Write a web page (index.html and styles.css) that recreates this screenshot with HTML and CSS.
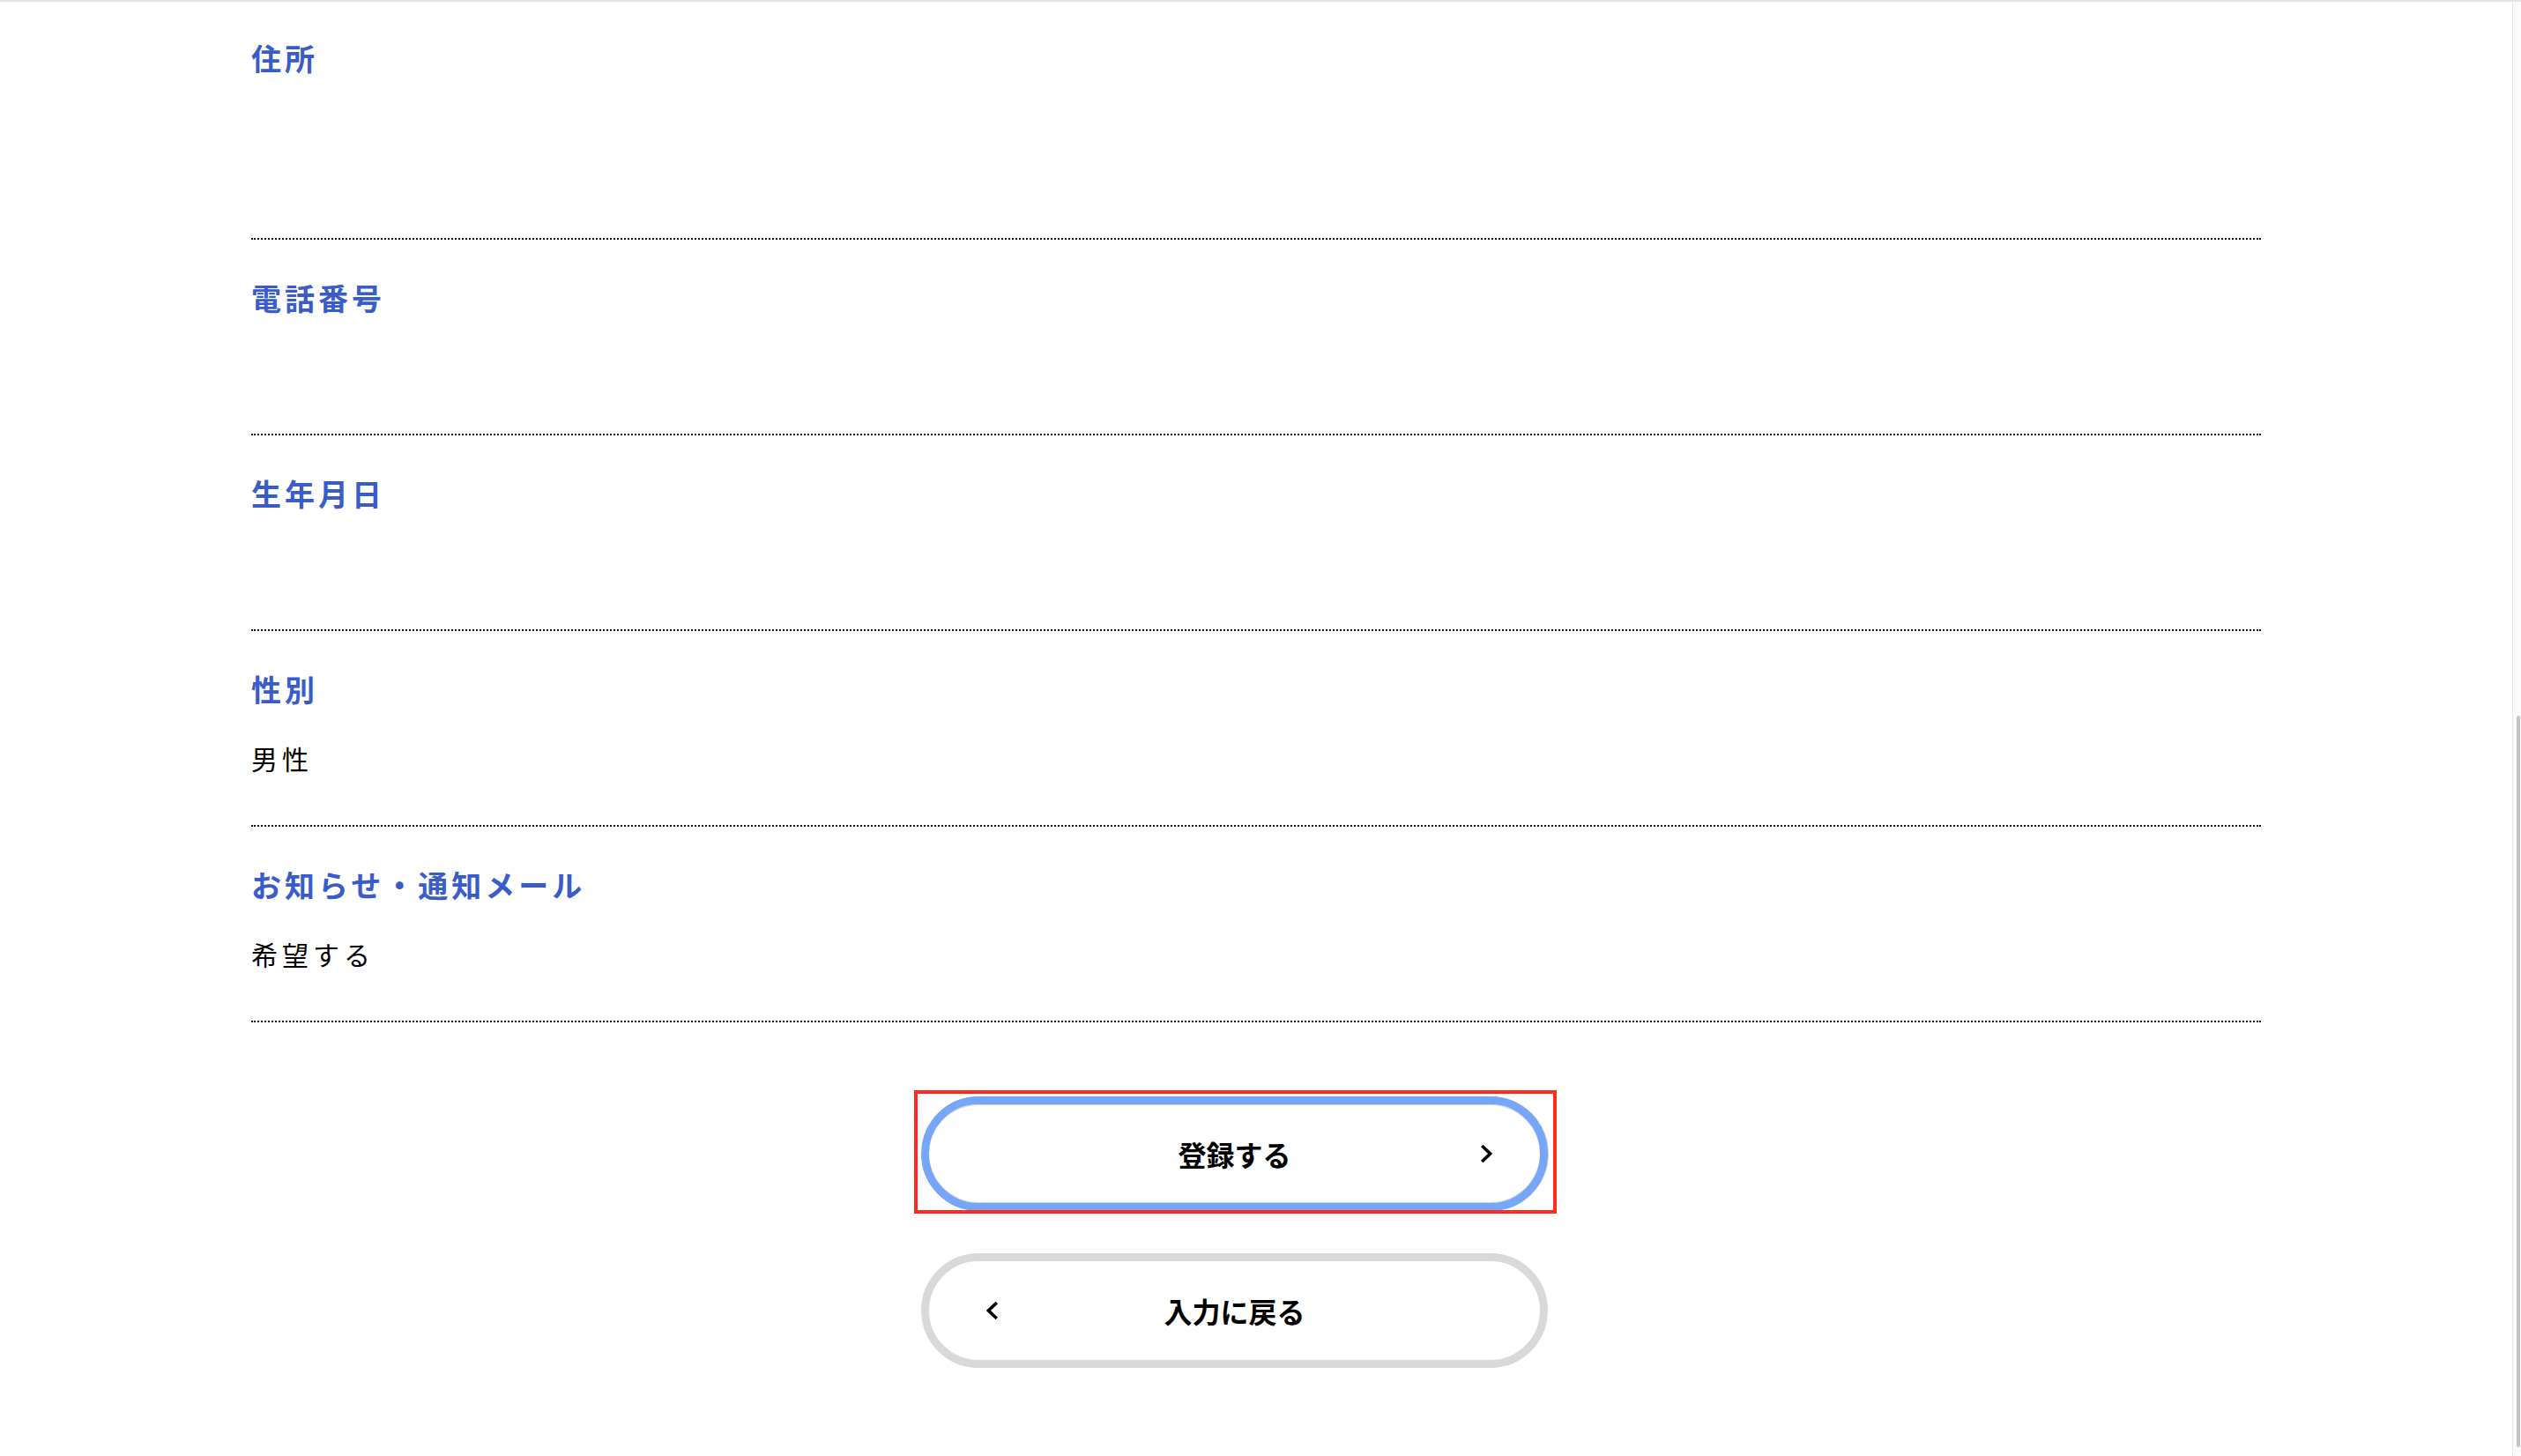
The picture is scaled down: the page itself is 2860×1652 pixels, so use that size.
FILE: index.html
```html
<!DOCTYPE html>
<html lang="ja">
<head>
<meta charset="utf-8">
<title>確認画面</title>
<link rel="stylesheet" href="styles.css">
</head>
<body>
<div class="window">
  <main class="page">
    <section class="confirm">
      <dl class="rows">
        <div class="row row-address">
          <dt class="label">住所</dt>
          <dd class="value value-address"></dd>
        </div>
        <div class="row">
          <dt class="label">電話番号</dt>
          <dd class="value"></dd>
        </div>
        <div class="row">
          <dt class="label">生年月日</dt>
          <dd class="value"></dd>
        </div>
        <div class="row">
          <dt class="label">性別</dt>
          <dd class="value">男性</dd>
        </div>
        <div class="row">
          <dt class="label">お知らせ・通知メール</dt>
          <dd class="value">希望する</dd>
        </div>
      </dl>
      <div class="actions">
        <button class="btn btn-primary" type="button">
          <span class="btn-text">登録する</span>
          <svg class="chev chev-next" width="14" height="22" viewBox="0 0 14 22" aria-hidden="true"><path d="M2.2 2 L11.6 11 L2.2 20" /></svg>
          <span class="highlight"></span>
        </button>
        <button class="btn btn-back" type="button">
          <svg class="chev chev-prev" width="14" height="22" viewBox="0 0 14 22" aria-hidden="true"><path d="M11.8 2 L2.4 11 L11.8 20" /></svg>
          <span class="btn-text">入力に戻る</span>
        </button>
      </div>
    </section>
  </main>
  <div class="scrollbar"><div class="thumb"></div></div>
</div>
</body>
</html>
```

FILE: styles.css
```css
html, body {
  margin: 0;
  padding: 0;
  background: #ffffff;
}

body {
  font-family: "Noto Sans CJK JP", "Noto Sans", sans-serif;
  color: #000;
  overflow: hidden;
}

.window {
  display: flex;
  height: 1652px;
  box-sizing: border-box;
  border-top: 2px solid #e6e3e8;
}

.page {
  flex: 1;
  min-width: 0;
}

.confirm {
  width: 2280px;
  margin: 0 auto;
}

.rows {
  margin: 0;
  padding: 0;
}

.row {
  padding: 46px 0 58px;
  border-bottom: 2px dotted #111;
}

.row-address {
  padding-top: 44px;
}

.label {
  margin: 0;
  font-size: 34px;
  line-height: 40px;
  font-weight: 700;
  letter-spacing: 4px;
  color: #3a5cc9;
}

.value {
  margin: 40px 0 0;
  min-height: 36px;
  font-size: 30px;
  line-height: 36px;
  font-weight: 400;
  letter-spacing: 5px;
  color: #000;
}

.value-address {
  min-height: 86px;
}

.actions {
  margin-top: 84px;
  padding-right: 49px;
  display: flex;
  flex-direction: column;
  align-items: center;
  gap: 48px;
}

.btn {
  position: relative;
  width: 711px;
  height: 130px;
  box-sizing: border-box;
  padding: 0;
  border: 9px solid #d9d9d9;
  border-radius: 65px;
  background: #fff;
  display: flex;
  align-items: center;
  justify-content: center;
  font-family: "Noto Sans CJK JP", "Noto Sans", sans-serif;
  font-size: 32px;
  font-weight: 700;
  color: #000;
  cursor: pointer;
}

.btn-primary {
  border-color: #76a6f8;
  box-shadow: 1px 0 0 #d2d2d2, inset 0 1px 0 #d6d6d6, inset 0 -1px 0 #d6d6d6;
}

.btn-text {
  display: block;
}

.chev {
  position: absolute;
  top: 50%;
  margin-top: -11px;
}

.chev path {
  fill: none;
  stroke: #000;
  stroke-width: 3.6;
  stroke-linejoin: miter;
  stroke-linecap: butt;
}

.chev-next {
  right: 54px;
}

.chev-prev {
  left: 65px;
}

.highlight {
  position: absolute;
  left: -17px;
  top: -16px;
  width: 729px;
  height: 140px;
  box-sizing: border-box;
  border: 4px solid #ff2b1c;
  pointer-events: none;
}

.scrollbar {
  width: 10px;
  box-sizing: border-box;
  border-left: 1px solid #e6e6e6;
  background: #fafafa;
  padding-top: 810px;
  padding-bottom: 10px;
  display: flex;
  flex-direction: column;
  align-items: flex-end;
}

.thumb {
  width: 4px;
  flex: 1;
  margin-right: 1px;
  border-radius: 2px;
  background: #c3c3c3;
}
```
